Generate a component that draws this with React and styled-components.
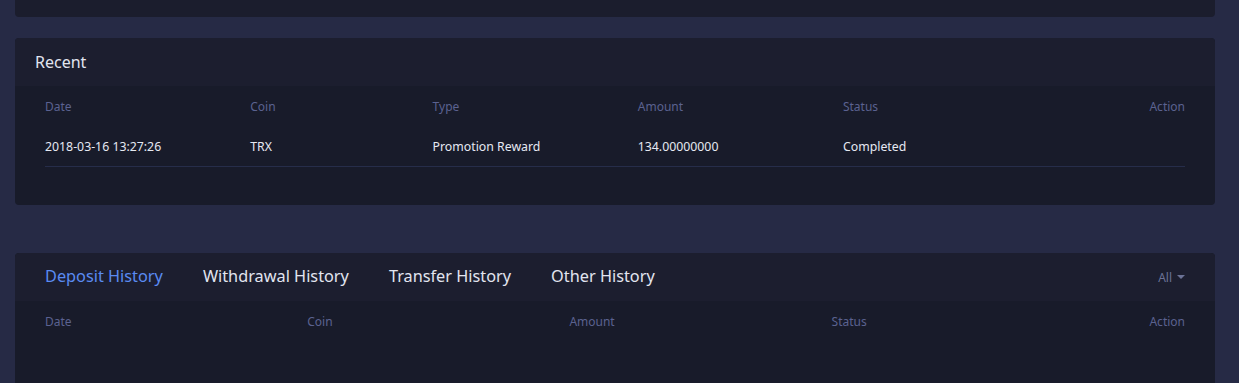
import React from "react";
import styled, { createGlobalStyle } from "styled-components";

const GlobalStyle = createGlobalStyle`
  html, body {
    margin: 0;
    padding: 0;
    background: #262a45;
    font-family: "Noto Sans", "Open Sans", Arial, sans-serif;
  }
`;

const recentCols = ["18%", "16%", "18%", "18%", "18%", "12%"];
const historyCols = ["23%", "23%", "23%", "23%", "8%"];

const recent = [
  {
    date: "2018-03-16 13:27:26",
    coin: "TRX",
    type: "Promotion Reward",
    amount: "134.00000000",
    status: "Completed",
  },
];

const tabs = ["Deposit History", "Withdrawal History", "Transfer History", "Other History"];

const App = () => {
  return (
    <>
      <GlobalStyle />
      <Page>
        <TopCard />
        <Card>
          <CardHeader>
            <Title>Recent</Title>
          </CardHeader>
          <CardBody $bottom={38}>
            <Table>
              <colgroup>
                {recentCols.map((w, i) => (
                  <col key={i} style={{ width: w }} />
                ))}
              </colgroup>
              <thead>
                <tr>
                  <Th>Date</Th>
                  <Th>Coin</Th>
                  <Th>Type</Th>
                  <Th>Amount</Th>
                  <Th>Status</Th>
                  <Th $right>Action</Th>
                </tr>
              </thead>
              <tbody>
                {recent.map((r, i) => (
                  <tr key={i}>
                    <Td>{r.date}</Td>
                    <Td>{r.coin}</Td>
                    <Td>{r.type}</Td>
                    <Td>{r.amount}</Td>
                    <Td>{r.status}</Td>
                    <Td $right></Td>
                  </tr>
                ))}
              </tbody>
            </Table>
          </CardBody>
        </Card>
        <Card $gap={48}>
          <CardHeader>
            <Tabs>
              {tabs.map((t, i) => (
                <Tab key={t} $active={i === 0}>
                  {t}
                </Tab>
              ))}
            </Tabs>
            <Filter>
              All <Caret />
            </Filter>
          </CardHeader>
          <CardBody $bottom={60}>
            <Table>
              <colgroup>
                {historyCols.map((w, i) => (
                  <col key={i} style={{ width: w }} />
                ))}
              </colgroup>
              <thead>
                <tr>
                  <Th>Date</Th>
                  <Th>Coin</Th>
                  <Th>Amount</Th>
                  <Th>Status</Th>
                  <Th $right>Action</Th>
                </tr>
              </thead>
            </Table>
          </CardBody>
        </Card>
      </Page>
    </>
  );
};

const Page = styled.div`
  width: 1200px;
  padding: 0 15px;
`;

const TopCard = styled.div`
  height: 17px;
  background: #1b1d2d;
  border-radius: 0 0 4px 4px;
`;

const Card = styled.div`
  margin-top: ${(p) => p.$gap || 21}px;
  border-radius: 4px;
  overflow: hidden;
  background: #181b2a;
`;

const CardHeader = styled.div`
  height: 48px;
  padding: 0 30px 0 20px;
  display: flex;
  align-items: center;
  justify-content: space-between;
  background: #1c1e2f;
`;

const Title = styled.div`
  font-size: 16px;
  color: #e2e5f0;
`;

const CardBody = styled.div`
  padding: 0 30px ${(p) => p.$bottom}px;
`;

const Table = styled.table`
  width: 100%;
  border-collapse: collapse;
  table-layout: fixed;
`;

const Th = styled.th`
  height: 40px;
  padding: 0;
  text-align: ${(p) => (p.$right ? "right" : "left")};
  font-size: 12px;
  font-weight: normal;
  color: #5b6290;
  white-space: nowrap;
`;

const Td = styled.td`
  height: 40px;
  padding: 0;
  text-align: ${(p) => (p.$right ? "right" : "left")};
  font-size: 12.3px;
  color: #e6e9f2;
  border-bottom: 1px solid #262d4a;
  white-space: nowrap;
`;

const Tabs = styled.div`
  display: flex;
  gap: 40px;
  padding-left: 10px;
  margin-top: -2px;
`;

const Tab = styled.div`
  font-size: 16.3px;
  color: ${(p) => (p.$active ? "#5a8bf2" : "#e2e5f0")};
  cursor: pointer;
`;

const Filter = styled.div`
  display: flex;
  align-items: center;
  gap: 5px;
  font-size: 12px;
  color: #6b7296;
`;

const Caret = styled.span`
  width: 0;
  height: 0;
  border-left: 4px solid transparent;
  border-right: 4px solid transparent;
  border-top: 4px solid #6b7296;
`;

export default App;
